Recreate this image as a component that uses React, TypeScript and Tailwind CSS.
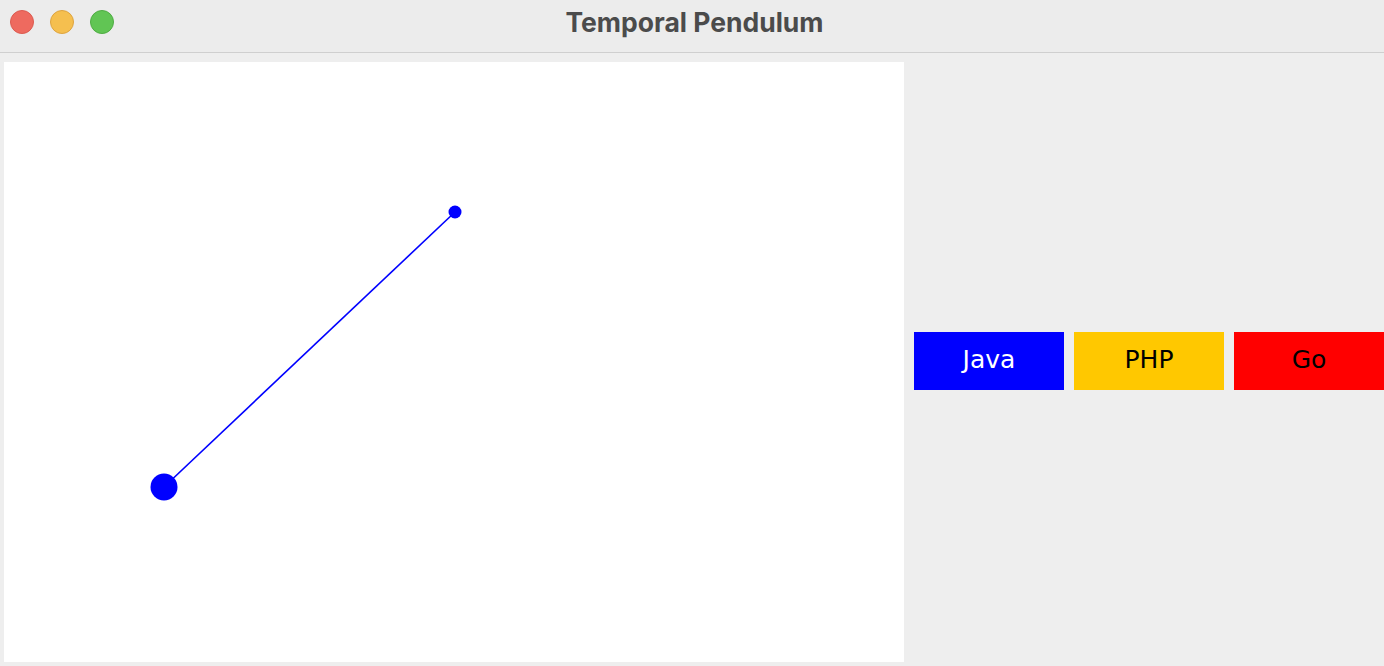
// Temporal Pendulum window: title bar, pendulum canvas and language buttons
import React from 'react';

const languages = [
  { name: 'Java', className: 'bg-[#0000ff] text-white' },
  { name: 'PHP', className: 'bg-[#ffc800] text-black' },
  { name: 'Go', className: 'bg-[#ff0000] text-black' },
];

function TitleBar() {
  return (
    <div className="relative flex h-[53px] items-start border-b border-[#cfcfcf] bg-[#ececec]">
      <div className="mt-[10px] flex items-center gap-4 pl-[10px]">
        <span className="h-6 w-6 rounded-full border border-[#dc5b50] bg-[#ee6a5f]" />
        <span className="h-6 w-6 rounded-full border border-[#dea440] bg-[#f5bf4f]" />
        <span className="h-6 w-6 rounded-full border border-[#4fac43] bg-[#61c554]" />
      </div>
      <div
        className="absolute inset-x-0 top-0 flex h-[45px] items-center justify-center pl-[5px] text-[26.5px] font-bold text-[#4b4b4b]"
        style={{ fontFamily: 'Inter, "Liberation Sans", sans-serif' }}
      >
        Temporal Pendulum
      </div>
    </div>
  );
}

function PendulumCanvas() {
  const pivot = { x: 451, y: 150 };
  const bob = { x: 160, y: 425 };
  return (
    <div className="h-[600px] w-[900px] shrink-0 bg-white">
      <svg width="900" height="600" viewBox="0 0 900 600">
        <line x1={pivot.x} y1={pivot.y} x2={bob.x} y2={bob.y} stroke="#0000ff" strokeWidth="1.6" />
        <circle cx={pivot.x} cy={pivot.y} r="6.5" fill="#0000ff" />
        <circle cx={bob.x} cy={bob.y} r="13.5" fill="#0000ff" />
      </svg>
    </div>
  );
}

export default function App() {
  return (
    <div className="h-[666px] w-[1384px] overflow-hidden bg-[#eeeeee]">
      <TitleBar />
      <div className="flex items-center pl-1 pt-[9px]">
        <PendulumCanvas />
        <div className="mb-[2px] ml-[10px] flex gap-[10px]">
          {languages.map(lang => (
            <div
              key={lang.name}
              className={`flex h-[58px] w-[150px] items-center justify-center pb-[3px] text-[25px] ${lang.className}`}
              style={{ fontFamily: '"DejaVu Sans", sans-serif' }}
            >
              {lang.name}
            </div>
          ))}
        </div>
      </div>
    </div>
  );
}
